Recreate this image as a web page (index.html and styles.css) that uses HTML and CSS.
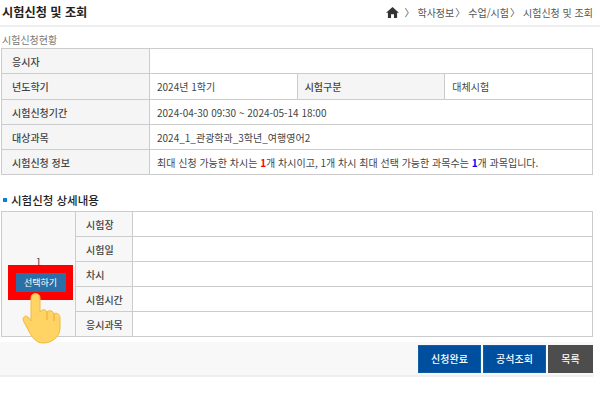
FILE: index.html
```html
<!DOCTYPE html>
<html lang="ko">
<head>
    <meta charset="UTF-8">
    <title>시험신청 및 조회</title>
    <link rel="stylesheet" href="styles.css">
</head>
<body>
    <div class="top">
        <h1>시험신청 및 조회</h1>
        <div class="crumb">
            <svg class="home" viewBox="0 0 14 12" width="13" height="11"><path d="M7 0 L14 6.400 L12 6.400 L12 12 L8.600 12 L8.600 8 L5.400 8 L5.400 12 L2 12 L2 6.400 L0 6.400 Z" fill="#333"/></svg>
            <span class="sep">〉</span><span>학사정보</span><span class="sep2">〉</span><span>수업/시험</span><span class="sep2">〉</span><span>시험신청 및 조회</span>
        </div>
    </div>

    <div class="caption">시험신청현황</div>
    <table class="info">
        <tr class="r1"><th>응시자</th><td colspan="3"></td></tr>
        <tr class="r2"><th>년도학기</th><td class="half">2024년 1학기</td><th class="th2">시험구분</th><td>대체시험</td></tr>
        <tr class="r3"><th>시험신청기간</th><td colspan="3">2024-04-30 09:30 ~ 2024-05-14 18:00</td></tr>
        <tr class="r3"><th>대상과목</th><td colspan="3">2024_1_관광학과_3학년_여행영어2</td></tr>
        <tr class="r3"><th>시험신청 정보</th><td colspan="3">최대 신청 가능한 차시는 <b class="red">1</b>개 차시이고, 1개 차시 최대 선택 가능한 과목수는 <b class="blue">1</b>개 과목입니다.</td></tr>
    </table>

    <h2 class="sub"><i></i>시험신청 상세내용</h2>
    <table class="detail">
        <tr>
            <td class="pick" rowspan="5">
                <div class="num">1</div>
                <div class="mark">
                    <span class="pick-btn">선택하기</span>
                </div>
                <svg class="hand" viewBox="0 0 40 52" width="40" height="52">
                    <path d="M10 6 C10 0 19 0 19 6 L19 20 C21 17 25 17 26 20 C28 18 32 18 33 22 C35 20 39 22 39 26 L39 36 C39 45 31 51 22 51 C16 51 13 47 10 43 L3 30 C0 25 5 22 8 26 L10 29 Z" fill="#ffd464" stroke="#f3b93a" stroke-width="1"/>
                    <path d="M26 20 L26 28 M33 22 L33 29" stroke="#e9ac33" stroke-width="1" fill="none"/>
                </svg>
            </td>
            <th>시험장</th><td></td>
        </tr>
        <tr><th>시험일</th><td></td></tr>
        <tr><th>차시</th><td></td></tr>
        <tr><th>시험시간</th><td></td></tr>
        <tr><th>응시과목</th><td></td></tr>
    </table>

    <div class="bottom">
        <a class="btn">신청완료</a>
        <a class="btn">공석조회</a>
        <a class="btn gray">목록</a>
    </div>
</body>
</html>
```

FILE: styles.css
```css
* {
    box-sizing: border-box;
}
body {
    margin: 0;
    width: 600px;
    height: 410px;
    overflow: hidden;
    background: #fff;
    font-family: "Noto Sans CJK KR", "Noto Sans", sans-serif;
    font-size: 10px;
    color: #444;
}
.top {
    display: flex;
    justify-content: space-between;
    align-items: center;
    height: 27px;
    padding: 0 7px 1px 2px;
    border-bottom: 2px solid #eee;
}
h1 {
    margin: 0;
    font-size: 12.200px;
    font-weight: 700;
    color: #222;
}
.crumb {
    display: flex;
    align-items: center;
    font-size: 10px;
    color: #555;
}
.home {
    margin-right: 5px;
}
.sep {
    margin-right: 3px;
}
.sep2 {
    margin: 0 3px 0 1px;
}
.caption {
    margin: 6px 0 0 2px;
    height: 14px;
    line-height: 14px;
    color: #777;
}
table {
    border-collapse: collapse;
    table-layout: fixed;
    width: 592px;
    margin-left: 1px;
}
.info {
    margin-top: 1px;
}
th, td {
    border: 1px solid #ccc;
    padding: 0 0 0 7px;
    font-weight: 400;
    text-align: left;
}
.info th {
    width: 148px;
    padding-left: 10px;
    background: #f5f5f5;
    font-weight: 500;
    color: #444;
}
.info td {
    padding-left: 7px;
}
.info .th2 {
    width: 140px;
    padding-left: 7px;
}
.half {
    width: 148px;
}
.r1 {
    height: 25px;
}
.r2 {
    height: 26px;
}
.r3 {
    height: 25px;
}
.red {
    color: #f00;
}
.blue {
    color: #00f;
}
.sub {
    display: flex;
    align-items: center;
    margin: 15px 0 0 3px;
    height: 20px;
    font-size: 11.500px;
    font-weight: 500;
    color: #222;
}
.sub i {
    width: 4px;
    height: 4px;
    margin-right: 4px;
    background: #0d7fd6;
}
.detail {
    margin-top: 1px;
}
.detail tr {
    height: 25px;
}
.detail th {
    width: 57px;
    padding-left: 10px;
    background: #f7f7f7;
    font-weight: 500;
    color: #444;
}
.detail .pick {
    width: 74px;
    padding: 0;
    background: #f7f7f7;
    text-align: center;
    vertical-align: top;
    position: relative;
}
.num {
    margin-top: 46px;
    height: 7px;
    line-height: 8px;
    color: #444;
}
.mark {
    margin: 0 0 0 6px;
    width: 65px;
    height: 35px;
    background: #f00;
    display: flex;
    align-items: center;
    justify-content: center;
}
.pick-btn {
    width: 50px;
    height: 19px;
    line-height: 19px;
    background: #2a6fa8;
    color: #fff;
    font-size: 9px;
}
.hand {
    position: absolute;
    left: 19px;
    top: 80px;
}
.bottom {
    display: flex;
    justify-content: flex-end;
    gap: 2px;
    width: 593px;
    height: 35px;
    margin-top: 5px;
    padding-top: 3px;
    background: #f8f8f8;
    border-bottom: 2px solid #eee;
}
.btn {
    display: block;
    width: 63px;
    height: 28px;
    line-height: 26px;
    text-align: center;
    background: #004f9f;
    border: 1px solid #0f5ea8;
    color: #fff;
    font-size: 10px;
    font-weight: 500;
}
.gray {
    width: 45px;
    background: #4d4d4d;
    border-color: #4d4d4d;
}
```
